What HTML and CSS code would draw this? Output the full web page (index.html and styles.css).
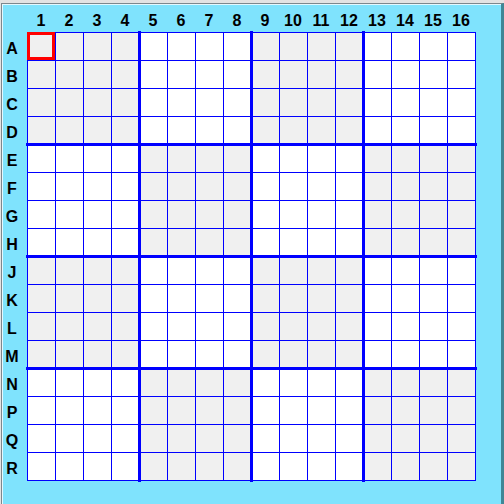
FILE: index.html
```html
<!DOCTYPE html>
<html>
<head>
<meta charset="utf-8">
<link rel="stylesheet" href="styles.css">
</head>
<body>
<div class="window">
  <div class="panel">
    <div class="inner">
      <div class="head">
        <div class="corner"></div>
        <div class="hl">1</div><div class="hl">2</div><div class="hl">3</div><div class="hl">4</div>
        <div class="hl">5</div><div class="hl">6</div><div class="hl">7</div><div class="hl">8</div>
        <div class="hl">9</div><div class="hl">10</div><div class="hl">11</div><div class="hl">12</div>
        <div class="hl">13</div><div class="hl">14</div><div class="hl">15</div><div class="hl">16</div>
      </div>
      <div class="body">
        <div class="labels">
          <div class="rl">A</div><div class="rl">B</div><div class="rl">C</div><div class="rl">D</div>
          <div class="rl">E</div><div class="rl">F</div><div class="rl">G</div><div class="rl">H</div>
          <div class="rl">J</div><div class="rl">K</div><div class="rl">L</div><div class="rl">M</div>
          <div class="rl">N</div><div class="rl">P</div><div class="rl">Q</div><div class="rl">R</div>
        </div>
        <div class="grid">
          <div class="row a"><i class="c"></i><i class="c"></i><i class="c"></i><i class="c"></i><i class="c"></i><i class="c"></i><i class="c"></i><i class="c"></i><i class="c"></i><i class="c"></i><i class="c"></i><i class="c"></i><i class="c"></i><i class="c"></i><i class="c"></i><i class="c"></i></div>
          <div class="row a"><i class="c"></i><i class="c"></i><i class="c"></i><i class="c"></i><i class="c"></i><i class="c"></i><i class="c"></i><i class="c"></i><i class="c"></i><i class="c"></i><i class="c"></i><i class="c"></i><i class="c"></i><i class="c"></i><i class="c"></i><i class="c"></i></div>
          <div class="row a"><i class="c"></i><i class="c"></i><i class="c"></i><i class="c"></i><i class="c"></i><i class="c"></i><i class="c"></i><i class="c"></i><i class="c"></i><i class="c"></i><i class="c"></i><i class="c"></i><i class="c"></i><i class="c"></i><i class="c"></i><i class="c"></i></div>
          <div class="row a"><i class="c"></i><i class="c"></i><i class="c"></i><i class="c"></i><i class="c"></i><i class="c"></i><i class="c"></i><i class="c"></i><i class="c"></i><i class="c"></i><i class="c"></i><i class="c"></i><i class="c"></i><i class="c"></i><i class="c"></i><i class="c"></i></div>
          <div class="row b"><i class="c"></i><i class="c"></i><i class="c"></i><i class="c"></i><i class="c"></i><i class="c"></i><i class="c"></i><i class="c"></i><i class="c"></i><i class="c"></i><i class="c"></i><i class="c"></i><i class="c"></i><i class="c"></i><i class="c"></i><i class="c"></i></div>
          <div class="row b"><i class="c"></i><i class="c"></i><i class="c"></i><i class="c"></i><i class="c"></i><i class="c"></i><i class="c"></i><i class="c"></i><i class="c"></i><i class="c"></i><i class="c"></i><i class="c"></i><i class="c"></i><i class="c"></i><i class="c"></i><i class="c"></i></div>
          <div class="row b"><i class="c"></i><i class="c"></i><i class="c"></i><i class="c"></i><i class="c"></i><i class="c"></i><i class="c"></i><i class="c"></i><i class="c"></i><i class="c"></i><i class="c"></i><i class="c"></i><i class="c"></i><i class="c"></i><i class="c"></i><i class="c"></i></div>
          <div class="row b"><i class="c"></i><i class="c"></i><i class="c"></i><i class="c"></i><i class="c"></i><i class="c"></i><i class="c"></i><i class="c"></i><i class="c"></i><i class="c"></i><i class="c"></i><i class="c"></i><i class="c"></i><i class="c"></i><i class="c"></i><i class="c"></i></div>
          <div class="row a"><i class="c"></i><i class="c"></i><i class="c"></i><i class="c"></i><i class="c"></i><i class="c"></i><i class="c"></i><i class="c"></i><i class="c"></i><i class="c"></i><i class="c"></i><i class="c"></i><i class="c"></i><i class="c"></i><i class="c"></i><i class="c"></i></div>
          <div class="row a"><i class="c"></i><i class="c"></i><i class="c"></i><i class="c"></i><i class="c"></i><i class="c"></i><i class="c"></i><i class="c"></i><i class="c"></i><i class="c"></i><i class="c"></i><i class="c"></i><i class="c"></i><i class="c"></i><i class="c"></i><i class="c"></i></div>
          <div class="row a"><i class="c"></i><i class="c"></i><i class="c"></i><i class="c"></i><i class="c"></i><i class="c"></i><i class="c"></i><i class="c"></i><i class="c"></i><i class="c"></i><i class="c"></i><i class="c"></i><i class="c"></i><i class="c"></i><i class="c"></i><i class="c"></i></div>
          <div class="row a"><i class="c"></i><i class="c"></i><i class="c"></i><i class="c"></i><i class="c"></i><i class="c"></i><i class="c"></i><i class="c"></i><i class="c"></i><i class="c"></i><i class="c"></i><i class="c"></i><i class="c"></i><i class="c"></i><i class="c"></i><i class="c"></i></div>
          <div class="row b"><i class="c"></i><i class="c"></i><i class="c"></i><i class="c"></i><i class="c"></i><i class="c"></i><i class="c"></i><i class="c"></i><i class="c"></i><i class="c"></i><i class="c"></i><i class="c"></i><i class="c"></i><i class="c"></i><i class="c"></i><i class="c"></i></div>
          <div class="row b"><i class="c"></i><i class="c"></i><i class="c"></i><i class="c"></i><i class="c"></i><i class="c"></i><i class="c"></i><i class="c"></i><i class="c"></i><i class="c"></i><i class="c"></i><i class="c"></i><i class="c"></i><i class="c"></i><i class="c"></i><i class="c"></i></div>
          <div class="row b"><i class="c"></i><i class="c"></i><i class="c"></i><i class="c"></i><i class="c"></i><i class="c"></i><i class="c"></i><i class="c"></i><i class="c"></i><i class="c"></i><i class="c"></i><i class="c"></i><i class="c"></i><i class="c"></i><i class="c"></i><i class="c"></i></div>
          <div class="row b"><i class="c"></i><i class="c"></i><i class="c"></i><i class="c"></i><i class="c"></i><i class="c"></i><i class="c"></i><i class="c"></i><i class="c"></i><i class="c"></i><i class="c"></i><i class="c"></i><i class="c"></i><i class="c"></i><i class="c"></i><i class="c"></i></div>
          <div class="vline v1"></div>
          <div class="vline v2"></div>
          <div class="vline v3"></div>
          <div class="hline h1"></div>
          <div class="hline h2"></div>
          <div class="hline h3"></div>
          <div class="sel"></div>
        </div>
      </div>
    </div>
  </div>
</div>
</body>
</html>
```
FILE: styles.css
```css
html, body {
  margin: 0;
  padding: 0;
  background: #7fe3fd;
}
.window {
  width: 504px;
  height: 504px;
  box-sizing: border-box;
  border-top: 3px solid #e3e3e3;
  border-left: 1px solid #e3e3e3;
  background: #e3e3e3;
}
.panel {
  height: 100%;
  box-sizing: border-box;
  border-top: 1px solid #7d878d;
  border-left: 1px solid #7d878d;
  border-right: 3px solid #3f8796;
  background: #7fe3fd;
}
.inner {
  height: 100%;
  box-sizing: border-box;
  border-top: 1px solid #e4f8fe;
  border-left: 1px solid #e4f8fe;
  font-family: "Liberation Sans", Arial, sans-serif;
  font-weight: bold;
  font-size: 16px;
  color: #000;
}
.head {
  display: flex;
  height: 27px;
}
.corner {
  width: 24px;
  flex: none;
}
.hl {
  width: 28px;
  flex: none;
  text-align: center;
  line-height: 16px;
  padding-top: 8px;
  box-sizing: border-box;
}
.body {
  display: flex;
}
.labels {
  width: 24px;
  flex: none;
  padding-top: 1px;
}
.rl {
  height: 28px;
  box-sizing: border-box;
  line-height: 16px;
  padding-top: 8px;
  padding-right: 6px;
  text-align: center;
}
.grid {
  position: relative;
  border-left: 1px solid #0000ff;
  border-top: 1px solid #0000ff;
  width: 448px;
}
.row {
  display: flex;
}
.c {
  display: block;
  width: 27px;
  height: 27px;
  border-right: 1px solid #0000ff;
  border-bottom: 1px solid #0000ff;
  background: #ffffff;
}
.row.a .c:nth-child(8n+1),
.row.a .c:nth-child(8n+2),
.row.a .c:nth-child(8n+3),
.row.a .c:nth-child(8n+4),
.row.b .c:nth-child(8n+5),
.row.b .c:nth-child(8n+6),
.row.b .c:nth-child(8n+7),
.row.b .c:nth-child(8n+8) {
  background: #f0f0f0;
}
.vline {
  position: absolute;
  top: -2px;
  width: 3px;
  height: 451px;
  background: #0000ff;
}
.v1 { left: 110px; }
.v2 { left: 222px; }
.v3 { left: 334px; }
.hline {
  position: absolute;
  left: -2px;
  height: 3px;
  width: 451px;
  background: #0000ff;
}
.h1 { top: 110px; }
.h2 { top: 222px; }
.h3 { top: 334px; }
.sel {
  position: absolute;
  left: -1px;
  top: -1px;
  width: 28px;
  height: 28px;
  box-sizing: border-box;
  border: 3px solid #ff0000;
}
```
